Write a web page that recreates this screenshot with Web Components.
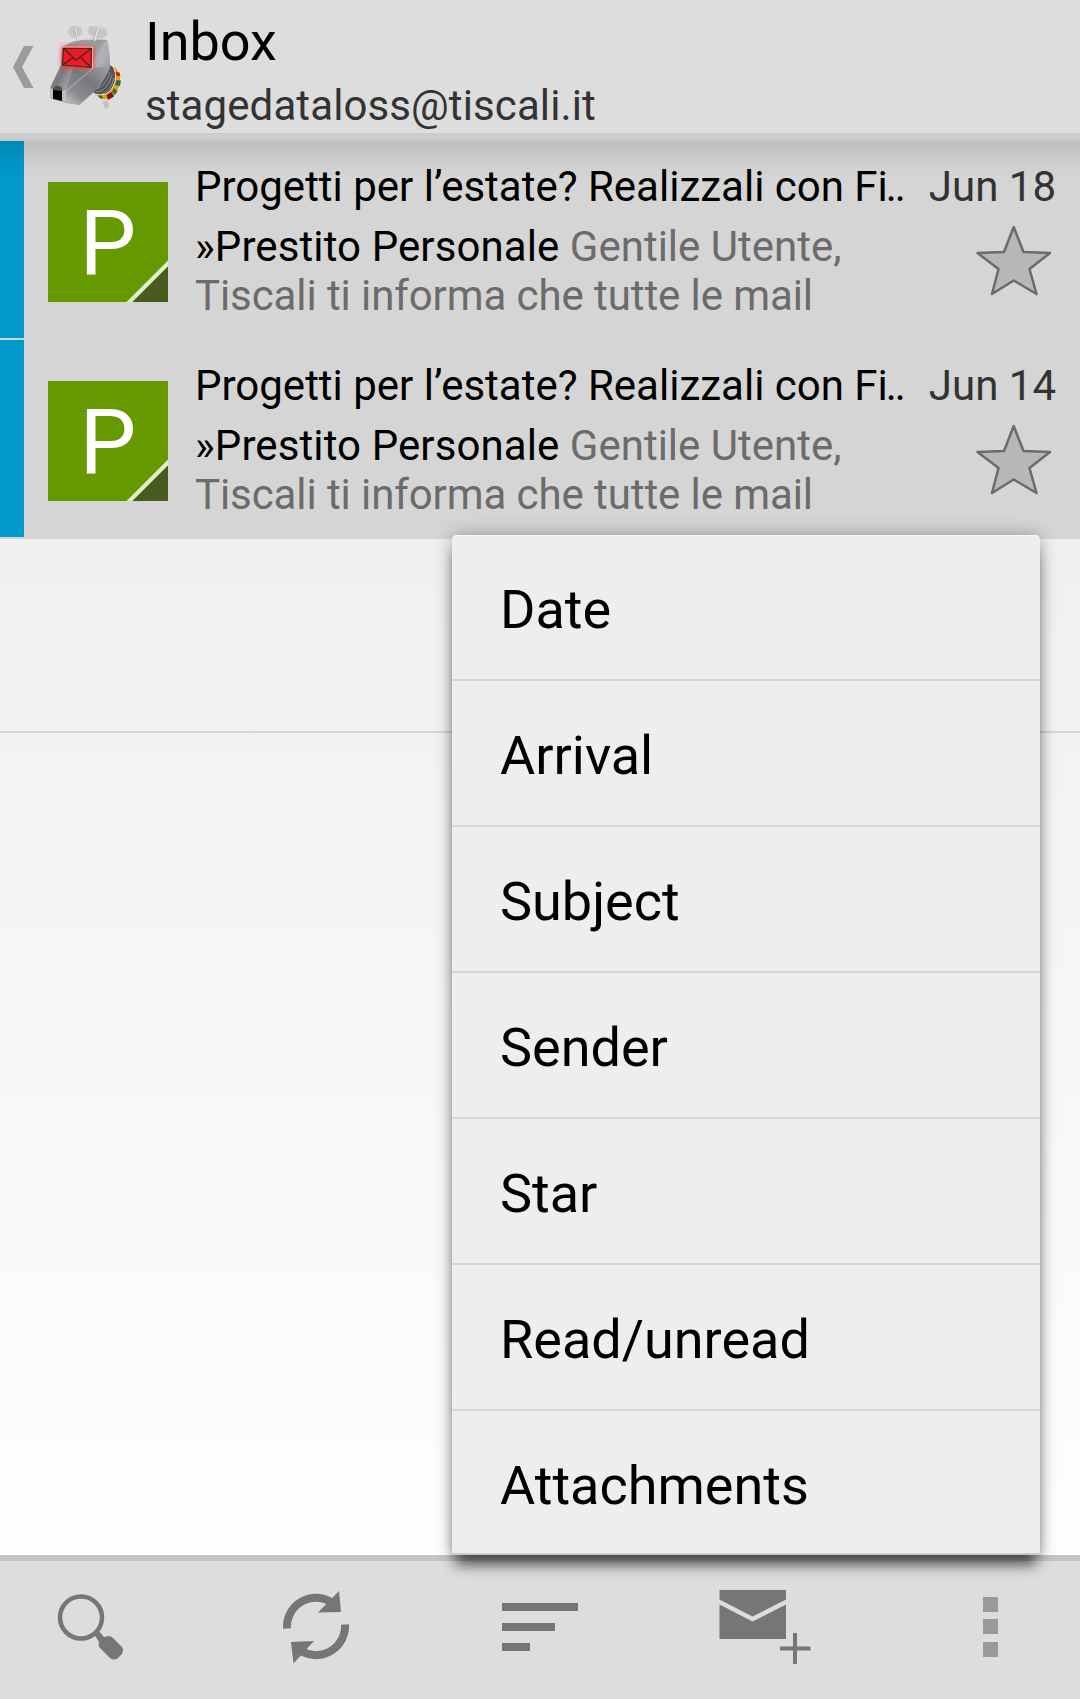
<!DOCTYPE html>
<html lang="en">
<head>
<meta charset="utf-8">
<title>Inbox</title>
<style>
html,body{margin:0;padding:0;height:1699px;overflow:hidden;background:#fff}
body{font-family:Roboto,"Liberation Sans",sans-serif;font-size:42px;color:#000}
.dots{letter-spacing:-2px}
.from{letter-spacing:.1px}
.second{letter-spacing:-.09px}
</style>
</head>
<body>
<mail-app>
  <title-bar slot="top"><span slot="title">Inbox</span><span slot="account">stagedataloss@tiscali.it</span></title-bar>
  <mail-row letter="P"><span slot="subject">Progetti per l’estate? Realizzali con F<span class="dots">i..</span></span><span slot="date">Jun 18</span><span slot="from" class="from">»Prestito Personale</span><span slot="preview">Gentile Utente,<br><span class="second">Tiscali ti informa che tutte le mail</span></span></mail-row>
  <mail-row letter="P"><span slot="subject">Progetti per l’estate? Realizzali con F<span class="dots">i..</span></span><span slot="date">Jun 14</span><span slot="from" class="from">»Prestito Personale</span><span slot="preview">Gentile Utente,<br><span class="second">Tiscali ti informa che tutte le mail</span></span></mail-row>
  <action-bar slot="bottom"></action-bar>
  <sort-menu slot="popup">
    <menu-item>Date</menu-item><menu-item>Arrival</menu-item><menu-item>Subject</menu-item><menu-item>Sender</menu-item><menu-item>Star</menu-item><menu-item>Read/unread</menu-item><menu-item>Attachments</menu-item>
  </sort-menu>
</mail-app>
<script>
const define=(name,html,setup)=>{
  const t=document.createElement('template');t.innerHTML=html;
  customElements.define(name,class extends HTMLElement{
    constructor(){super();this.attachShadow({mode:'open'}).append(t.content.cloneNode(true));}
    connectedCallback(){if(setup)setup(this,this.shadowRoot);}
  });
};

define('mail-app',`<style>
:host{display:flex;flex-direction:column;position:relative;width:1080px;height:1699px;overflow:hidden}
main{flex:1;display:flex;flex-direction:column;background:linear-gradient(#f0f0f0 398px,#fefefe);position:relative}
main::before{content:"";position:absolute;left:0;right:0;top:0;height:36px;z-index:1;background:linear-gradient(rgba(0,0,0,.11),rgba(0,0,0,.04) 50%,transparent);pointer-events:none;border-top:1px solid rgba(0,0,0,.07);box-sizing:border-box}
.footer{height:192px;border-bottom:2px solid #d7d7d7}
</style><slot name="top"></slot><main><slot></slot><div class="footer"></div></main><slot name="bottom"></slot><slot name="popup"></slot>`);

define('title-bar',`<style>
:host{display:flex;height:133px;background:#ddd;border-bottom:6px solid #ccc;box-shadow:0 2px #c6c6c6;margin-bottom:2px;position:relative;z-index:2}
svg{width:145px;height:133px;flex:none}
.t{display:flex;flex-direction:column;line-height:1;white-space:nowrap}
.a{font-size:54px;line-height:64px;margin-top:10px}
.b{font-size:42px;line-height:50px;color:#333;margin-top:7px;letter-spacing:.1px}
</style>
<svg viewBox="0 0 145 133"><defs>
<linearGradient id="head" x1="0" y1="0" x2="1" y2="1"><stop offset="0" stop-color="#77797d"/><stop offset=".5" stop-color="#a7a9ad"/><stop offset="1" stop-color="#96989c"/></linearGradient>
<linearGradient id="side" x1="0" y1="0" x2=".7" y2="1"><stop offset="0" stop-color="#898b8f"/><stop offset=".5" stop-color="#b0b2b6"/><stop offset="1" stop-color="#8e9094"/></linearGradient>
<linearGradient id="jaw" x1="0" y1="1" x2="1" y2="0"><stop offset="0" stop-color="#d0d1d3"/><stop offset=".3" stop-color="#898b8f"/><stop offset=".6" stop-color="#77797d"/><stop offset="1" stop-color="#a0a2a6"/></linearGradient>
<linearGradient id="snout" x1="0" y1="0" x2="1" y2=".6"><stop offset="0" stop-color="#a4a6aa"/><stop offset=".5" stop-color="#77797d"/><stop offset="1" stop-color="#a7a9ac"/></linearGradient>
<filter id="glow" x="-50%" y="-50%" width="200%" height="200%"><feGaussianBlur stdDeviation="2.2"/></filter></defs>
<path d="M24 46h9.500L22 67l11.500 21H24L13 67z" fill="#9b9b9b"/>
<path d="M103 101q5-2 6 3 0 4-3 5-3-2-3-8z" fill="#bfc1c3"/>
<path d="M110 65L105 70L93 91L96 96Q108 98 114 89Q118 79 114 68z" fill="#54565a"/>
<path d="M96 92Q107 92 112 75M99 95Q111 93 114 78M95 89Q105 88 110 72" fill="none" stroke="#8d8f93" stroke-width="1"/>
<path d="M112.500 65Q118 68 120.500 76Q121.500 87 114.500 96Q108 101.500 101 99L94 94Q101 96 106 94Q112 91 115 82Q117 73 112.500 65z" fill="#e89c1b" stroke="#fae3a9" stroke-width="1"/>
<path d="M115.500 72L119.500 72.500L120.500 76L116.500 76z" fill="#b82020"/>
<path d="M116.500 80L121 80.500L120 86L115 85z" fill="#28704d"/>
<path d="M114 88L117.500 91L115 95L112 92z" fill="#28704d"/>
<path d="M106.500 95L111.500 92L114 96.500L108 100z" fill="#7a1517"/>
<path d="M98 95.500L102 95.500L103 99L99.500 98z" fill="#28704d"/>
<path d="M62 48Q68 41 81 40Q96 37 107 40L109 50L110 67Q107 76 98 88L79 105L66 103L50 98V88L61 65z" fill="url(#head)"/>
<path d="M92 47L107 40Q110 50 110 67Q103 79 93 92L91 68z" fill="url(#side)"/>
<path d="M61 66L91 68L110 66Q104 80 94 92L79 105L66 102L65 91L71 72z" fill="url(#jaw)"/>
<path d="M61 65L73 68L65 91L50 91L52 84z" fill="url(#snout)"/>
<path d="M50 88l4 1v11l-4-2zM62 91l4-1v12l-4-1z" fill="#bbbdc0"/>
<path d="M66 91L91 70L107 41" fill="none" stroke="#c8cacc" stroke-width=".7"/>
<path d="M53 89q3-4 9 0v12l-9-2z" fill="#000"/><path d="M53 90q1-5 6-4 4 1 3 5z" fill="#4c4e50"/>
<path d="M63 48Q69 41 82 40L107 40L93 47z" fill="#999b9f"/><path d="M64 46Q70 41 82 39.500L106 39" fill="none" stroke="#d8d8d9"/>
<rect x="61.500" y="46.500" width="32" height="22" fill="#f33" opacity=".85" filter="url(#glow)"/>
<path d="M63.500 48L91.500 48.500L91 67.500L62.500 65z" fill="#ed1c24" stroke="#43201e" stroke-width="1.100"/>
<path d="M63.500 48L75.500 60L78 58.500L91.500 48.500M62.500 65L73.500 57.500M91 67.500L81 57.500" fill="none" stroke="#43201e" stroke-width="1.100"/>
<path d="M62 47L92.500 47L92.500 69" fill="none" stroke="#ffb5b5" stroke-width=".9"/>
<ellipse cx="75" cy="31.300" rx="7.300" ry="6.500" fill="#c6c6c6" transform="rotate(12 75 31.300)"/><ellipse cx="97.500" cy="31.500" rx="10.300" ry="6.300" fill="#c6c6c6" transform="rotate(13 97.500 31.500)"/>
<path d="M69 30Q69 24 75 25L79 27M88 30Q87 24 93 25L103 28" fill="none" stroke="#e6e6e6" stroke-width="1"/>
<path d="M75 28L77.500 40M98 28L94.500 41" stroke="#ececec" stroke-width="1.200"/><path d="M74 28L77 40M97 28L93.500 40" stroke="#a4a4a4" stroke-width=".7"/>
</svg><div class="t"><div class="a"><slot name="title"></slot></div><div class="b"><slot name="account"></slot></div></div>`);

define('mail-row',`<style>
:host{display:flex;height:197px;border-bottom:2px solid #d5d5d5;background:#d5d5d5;line-height:49px;color:#000}
.bar{width:24px;background:#09c;flex:none}
.av{width:120px;height:120px;margin:41px 27px 0 24px;background:#690;flex:none;display:grid;grid-template:120px/120px}
.av>*{grid-area:1/1}
.l{color:#fff;font-size:90px;line-height:120px;text-align:center;padding-top:2px;height:118px}
.c{flex:1;display:flex;flex-direction:column;padding-right:24px;min-width:0}
.r{display:flex;justify-content:space-between;white-space:nowrap}
.s{margin-top:21px;height:60px}
.d{color:#333}.p{color:#6b6b6b}
svg{display:block}.star{width:80px;height:76px;margin:1px 1px 0 0;flex:none}
</style><div class="bar"></div><div class="av"><div class="l"></div><svg viewBox="0 0 120 120"><path d="M78.500 120L120 78.500V84.500L84.500 120z" fill="#dfeecb"/><path d="M84.500 120L120 84.500V120z" fill="#4a5b20"/></svg></div>
<div class="c"><div class="r s"><slot name="subject"></slot><span class="d"><slot name="date"></slot></span></div>
<div class="r"><div><slot name="from"></slot> <span class="p"><slot name="preview"></slot></span></div>
<svg class="star" viewBox="0 0 80 76"><path d="M38.700 4L48.500 29L75 30L54.500 46L61.500 71L38.700 57.500L17 71L23.500 46L2.500 30L29 29z" fill="#b7b7b7" stroke="#6b6b6b" stroke-width="2.500" stroke-linejoin="round"/></svg></div></div>`,(h,r)=>{r.querySelector('.l').textContent=h.getAttribute('letter');});

define('sort-menu',`<style>
:host{display:flex;flex-direction:column;position:absolute;left:452px;top:535px;width:588px;height:1020px;box-sizing:border-box;background:#eee;border-radius:5px 5px 1px 1px;z-index:5;box-shadow:inset 0 1px #fafafa,inset 0 -2px #c9cccc,0 0 18px rgba(0,0,0,.3),0 14px 14px -4px rgba(0,0,0,.58)}
</style><slot></slot>`);
define('menu-item',`<style>
:host{display:flex;align-items:center;height:144px;border-bottom:2px solid #d5d5d5;padding-left:48px;font-size:54px;flex:none}
:host(:last-child){border-bottom:0}
span{line-height:64px;margin-top:6px}
</style><span><slot></slot></span>`);

define('action-bar',`<style>
:host{display:flex;height:138px;background:#ddd;border-top:6px solid #c5c5c5;flex:none}
svg{display:block;width:1080px;height:138px}
</style><svg viewBox="0 1561 1080 138" fill="#767676">
<circle cx="81" cy="1617.500" r="21" fill="none" stroke="#767676" stroke-width="4.500"/><path d="M94 1634l4-4 6 7 5-1q2 0 4 2l9 9q2 3 0 7l-4 4q-4 3-8 0l-10-10q-2-2-1-6z"/>
<path d="M287 1628.500A29 29 0 0 1 331 1602" fill="none" stroke="#767676" stroke-width="8"/><path d="M318 1612.500l21-21.500 2 21z"/>
<path d="M345 1624.500A29 29 0 0 1 302 1651.500" fill="none" stroke="#767676" stroke-width="8"/><path d="M291 1642l23-1-20.500 22.500z"/>
<path d="M502 1603h76v8h-76zM502 1623h53v8h-53zM502 1643h28v8h-28z"/>
<path d="M719.500 1590H786v9.500L752.500 1616.500L719.500 1599.500zM719.500 1604.500L752.500 1621.500L786 1604.500V1639H719.500z"/>
<path d="M780 1646.500h13V1633h4v13.500h13.500v4H797V1664h-4v-13.500h-13z"/>
<path d="M983 1597h15v15h-15zM983 1619h15v15h-15zM983 1642h15v15h-15z" fill="#999"/></svg>`);
</script>
</body>
</html>
